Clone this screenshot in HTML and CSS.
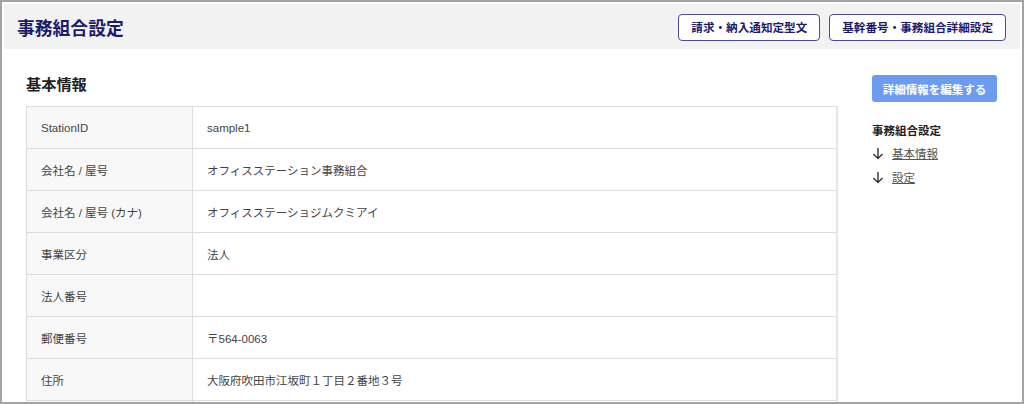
FILE: index.html
```html
<!DOCTYPE html>
<html lang="ja">
<head>
    <meta charset="UTF-8">
    <meta name="viewport" content="width=device-width, initial-scale=1.0">
    <title>事務組合設定</title>
    <link rel="stylesheet" href="styles.css">
</head>
<body>
<div class="frame">
    <header class="page-header">
        <h1>事務組合設定</h1>
        <div class="header-actions">
            <button class="outline-btn">請求・納入通知定型文</button>
            <button class="outline-btn">基幹番号・事務組合詳細設定</button>
        </div>
    </header>

    <div class="content">
        <section class="main">
            <h2>基本情報</h2>
            <table class="info-table">
                <tr><th>StationID</th><td>sample1</td></tr>
                <tr><th>会社名 / 屋号</th><td>オフィスステーション事務組合</td></tr>
                <tr><th>会社名 / 屋号 (カナ)</th><td>オフィスステーショジムクミアイ</td></tr>
                <tr><th>事業区分</th><td>法人</td></tr>
                <tr><th>法人番号</th><td></td></tr>
                <tr><th>郵便番号</th><td>〒564-0063</td></tr>
                <tr><th>住所</th><td>大阪府吹田市江坂町１丁目２番地３号</td></tr>
                <tr><th></th><td></td></tr>
            </table>
        </section>

        <aside class="side">
            <button class="edit-btn">詳細情報を編集する</button>
            <div class="side-title">事務組合設定</div>
            <ul class="side-nav">
                <li>
                    <svg width="12" height="13" viewBox="0 0 12 13"><path d="M6 1v10.5M1.5 7l4.5 4.5 4.5-4.5" fill="none" stroke="#333" stroke-width="1.4"/></svg>
                    <a href="#">基本情報</a>
                </li>
                <li>
                    <svg width="12" height="13" viewBox="0 0 12 13"><path d="M6 1v10.5M1.5 7l4.5 4.5 4.5-4.5" fill="none" stroke="#333" stroke-width="1.4"/></svg>
                    <a href="#">設定</a>
                </li>
            </ul>
        </aside>
    </div>
</div>
</body>
</html>
```

FILE: styles.css
```css
/* 全体 */
body {
    margin: 0;
    font-family: "Liberation Sans", "Noto Sans CJK JP", sans-serif;
    color: #444;
    background-color: #fff;
}
.frame {
    height: 404px;
    box-sizing: border-box;
    border: 2px solid #a3a3a3;
    padding: 2px;
    overflow: hidden;
}

/* ヘッダー */
.page-header {
    height: 45px;
    background-color: #f2f2f2;
    display: flex;
    align-items: center;
    justify-content: space-between;
    padding: 0 14px 0 13px;
}
.page-header h1 {
    margin: 0;
    font-size: 17.8px;
    font-weight: bold;
    color: #1e1a6b;
}
.header-actions {
    display: flex;
    gap: 9px;
    margin-top: 1px;
}
.outline-btn {
    height: 27px;
    padding: 0 12px;
    font-family: inherit;
    font-size: 11.6px;
    font-weight: bold;
    color: #1e1a6b;
    background-color: #fff;
    border: 1px solid #4f4892;
    border-radius: 4px;
    cursor: pointer;
}

/* コンテンツ */
.content {
    display: flex;
    gap: 34px;
    padding: 26px 23px 0 22px;
}
.main {
    width: 812px;
}
.main h2 {
    margin: 0 0 11px;
    font-size: 15.2px;
    line-height: 20px;
    font-weight: bold;
    color: #222;
}
.info-table {
    width: 100%;
    border-collapse: collapse;
    border-right: 2px solid #e6e6e6;
    font-size: 11.5px;
}
.info-table th,
.info-table td {
    height: 41px;
    padding: 0 13px 0 14px;
    border: 1px solid #dcdcdc;
    text-align: left;
    font-weight: normal;
    color: #444;
}
.info-table th {
    width: 138px;
    background-color: #f8f8f8;
}
.info-table td {
    background-color: #fff;
}

/* サイド */
.side {
    width: 125px;
}
.edit-btn {
    width: 125px;
    height: 27px;
    font-family: inherit;
    font-size: 11.5px;
    font-weight: bold;
    color: #fff;
    background-color: #6c9cf0;
    border: none;
    border-radius: 3px;
    cursor: pointer;
}
.side-title {
    margin-top: 21px;
    font-size: 11.5px;
    line-height: 16px;
    font-weight: bold;
    color: #222;
}
.side-nav {
    list-style: none;
    margin: 2px 0 0;
    padding: 0;
}
.side-nav li {
    display: flex;
    align-items: center;
    gap: 8px;
    height: 24px;
    font-size: 11.5px;
}
.side-nav a {
    color: #555;
    text-decoration: underline;
}
```
